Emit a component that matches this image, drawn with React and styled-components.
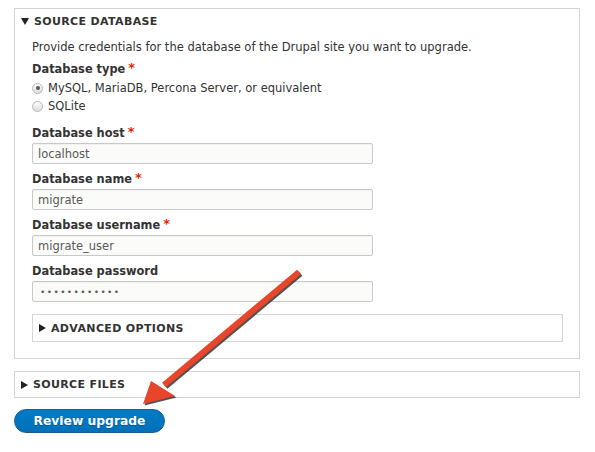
import React from "react";
import styled, { createGlobalStyle } from "styled-components";

const GlobalStyle = createGlobalStyle`
  body {
    margin: 0;
    background: #fff;
    font-family: "DejaVu Sans", Verdana, sans-serif;
    color: #333;
  }
`;

const Page = styled.div`
  position: relative;
  width: 595px;
  height: 452px;
  padding: 8px 15px 0 14px;
  box-sizing: border-box;
`;

const Fieldset = styled.div`
  border: 1px solid #d4d4d4;
  background: #fff;
  margin-bottom: ${(p) => p.$gap || 0}px;
`;

const Summary = styled.div`
  display: flex;
  align-items: center;
  gap: 5px;
  height: ${(p) => p.$height || 25}px;
  padding-left: 6px;
  font-size: 11px;
  font-weight: bold;
  letter-spacing: 0.35px;
  text-transform: uppercase;
  color: #333;
`;

const Caret = styled.span`
  width: 0;
  height: 0;
  ${(p) =>
    p.$open
      ? `border-left: 4px solid transparent;
         border-right: 4px solid transparent;
         border-top: 7px solid #222;`
      : `border-top: 4px solid transparent;
         border-bottom: 4px solid transparent;
         border-left: 7px solid #222;`}
`;

const Body = styled.div`
  padding: 6px 16px 16px 17px;
`;

const Description = styled.p`
  margin: 0 0 8px;
  font-size: 11.5px;
  line-height: 14px;
`;

const Label = styled.div`
  font-size: 11.4px;
  font-weight: bold;
  line-height: 14px;
  margin-bottom: 3px;
  color: #333;
`;

const Req = styled.span`
  color: #e62600;
  margin-left: 3px;
  font-size: 13px;
  vertical-align: top;
  line-height: 12px;
`;

const FormItem = styled.div`
  margin-bottom: ${(p) => p.$gap ?? 8}px;
`;

const RadioRow = styled.div`
  display: flex;
  align-items: center;
  gap: 5px;
  height: 18px;
  font-size: 11.5px;
`;

const Radio = styled.span`
  width: 9px;
  height: 9px;
  border-radius: 50%;
  border: 1px solid #b8b8b8;
  background: linear-gradient(#fdfdfd, #dcdcdc);
  display: flex;
  align-items: center;
  justify-content: center;
  &::after {
    content: "";
    width: 4px;
    height: 4px;
    border-radius: 50%;
    background: ${(p) => (p.$checked ? "#555" : "transparent")};
  }
`;

const Input = styled.div`
  height: 19px;
  width: ${(p) => (p.$secret ? 332 : 334)}px;
  border: 1px solid #c8c8c8;
  border-radius: 2px;
  background: #fbfbf9;
  box-shadow: inset 0 1px 1px rgba(0, 0, 0, 0.04);
  display: flex;
  align-items: center;
  padding-left: ${(p) => (p.$secret ? 7 : 5)}px;
  font-size: ${(p) => (p.$secret ? 9 : 11.5)}px;
  color: #595959;
  letter-spacing: ${(p) => (p.$secret ? "1.4px" : "0")};
`;

const Button = styled.button`
  display: block;
  height: 24px;
  width: 151px;
  border-radius: 14px;
  border: 1px solid #1e5c90;
  background: linear-gradient(#007bc6, #0071b8);
  color: #fff;
  font-family: "DejaVu Sans", Verdana, sans-serif;
  font-weight: bold;
  font-size: 12.3px;
  text-shadow: 0 1px 1px rgba(0, 0, 0, 0.25);
  padding: 0;
`;

const ArrowLayer = styled.svg`
  position: absolute;
  left: 0;
  top: 0;
  pointer-events: none;
`;

const fields = [
  { label: "Database host", value: "localhost", req: true },
  { label: "Database name", value: "migrate", req: true },
  { label: "Database username", value: "migrate_user", req: true },
  { label: "Database password", value: "••••••••••••", secret: true },
];

export default function App() {
  return (
    <>
      <GlobalStyle />
      <Page>
        <Fieldset $gap={12}>
          <Summary $height={25}>
            <Caret $open />
            Source database
          </Summary>
          <Body>
            <Description>
              Provide credentials for the database of the Drupal site you want to upgrade.
            </Description>
            <FormItem $gap={11}>
              <Label>
                Database type<Req>*</Req>
              </Label>
              <RadioRow>
                <Radio $checked />
                MySQL, MariaDB, Percona Server, or equivalent
              </RadioRow>
              <RadioRow>
                <Radio />
                SQLite
              </RadioRow>
            </FormItem>
            {fields.map((f, i) => (
              <FormItem key={i} $gap={i === fields.length - 1 ? 12 : 8}>
                <Label>
                  {f.label}
                  {f.req && <Req>*</Req>}
                </Label>
                <Input $secret={f.secret}>{f.value}</Input>
              </FormItem>
            ))}
            <Fieldset>
              <Summary $height={26}>
                <Caret />
                Advanced options
              </Summary>
            </Fieldset>
          </Body>
        </Fieldset>
        <Fieldset $gap={11}>
          <Summary $height={25}>
            <Caret />
            Source files
          </Summary>
        </Fieldset>
        <Button>Review upgrade</Button>
        <ArrowLayer width="595" height="452" viewBox="0 0 595 452">
          <g transform="translate(1.5 1.5)" opacity="0.75">
            <line x1="299" y1="272" x2="164" y2="385" stroke="#1a1a1a" strokeWidth="6" />
            <polygon points="143,404 151,381 175,396" fill="#1a1a1a" />
          </g>
          <line x1="299" y1="272" x2="164" y2="385" stroke="#e8452b" strokeWidth="6" />
          <polygon points="143,404 151,381 175,396" fill="#e8452b" />
        </ArrowLayer>
      </Page>
    </>
  );
}
